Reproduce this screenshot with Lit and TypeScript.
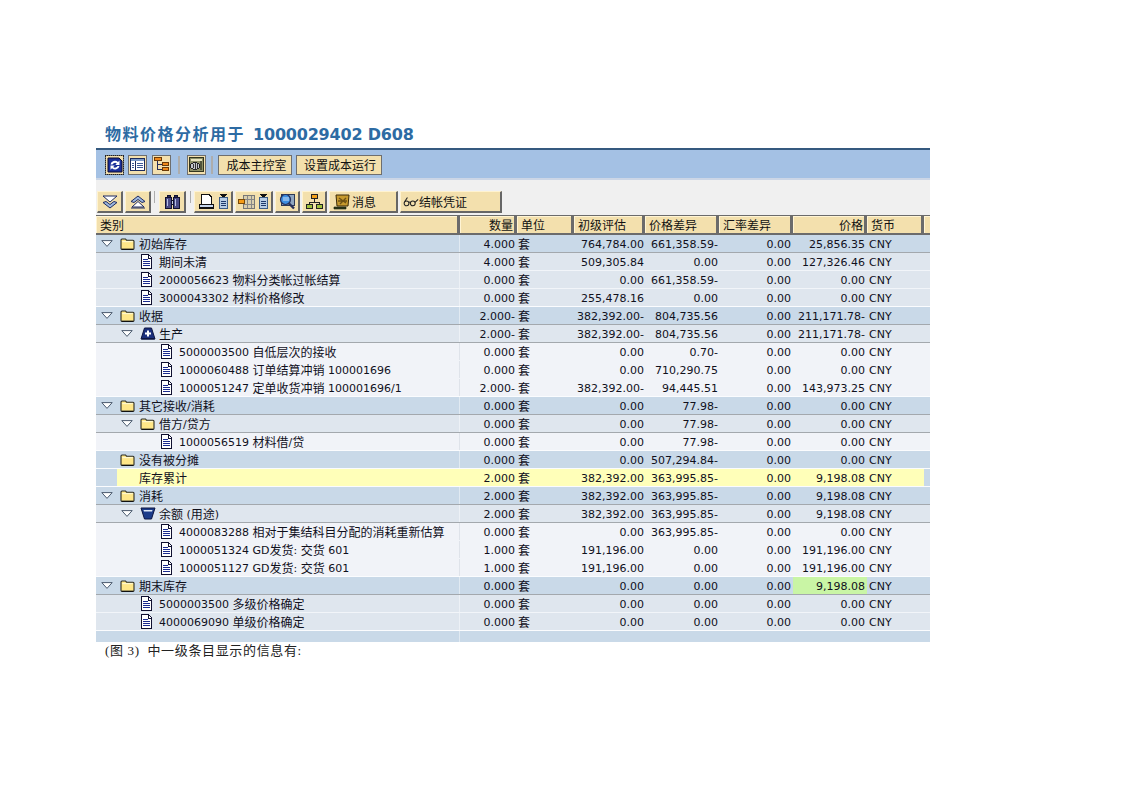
import { LitElement, html, css, svg } from "lit";
import { customElement } from "lit/decorators.js";

const ic = (w: number, h: number, body: unknown) =>
  html`<svg width=${w} height=${h} viewBox="0 0 ${w} ${h}" shape-rendering="crispEdges" style="display:block;flex:none">${body}</svg>`;

const tri = html`<svg width="12" height="7" viewBox="0 0 12 7" style="display:block"><path d="M.8.6H11.2L6 6.4Z" fill="#fff" stroke="#4a5a6e" stroke-width="1"/></svg>`;
const folder = html`<svg width="15" height="12" viewBox="0 0 15 12" style="display:block;flex:none"><path d="M1 10.5V2Q1 1 2 1H5.5L6.5 2.2H13Q14 2.2 14 3.2V10.5Q14 11.3 13 11.3H2Q1 11.3 1 10.5Z" fill="#ffe788" stroke="#2c2c24" stroke-width="1.1"/><path d="M2.2 3.6H12.8" stroke="#fff8cc" stroke-width="1.2"/><path d="M1.5 11.4H13.5" stroke="#111" stroke-width="1.2"/></svg>`;
const doc = ic(13, 15, svg`<path d="M1.5.5H8.5L11.5 3.5V14.5H1.5Z" fill="#fff" stroke="#101030"/><path d="M8 1V4H11" fill="none" stroke="#101030"/><path d="M3 5H8M3 7H10M3 9H10M3 11H10" stroke="#1a2a90"/>`);
const plusIc = html`<svg width="16" height="13" viewBox="0 0 16 13" style="display:block"><path d="M4.5 1H11.5L15 12H1Z" fill="#1a2f7c" stroke="#0c1440"/><path d="M7 3.5H9V5.5H11V7.5H9V9.5H7V7.5H5V5.5H7Z" fill="#fff"/><path d="M1.5 11H14.5V12.5H1.5Z" fill="#0c1440"/></svg>`;
const bucketIc = html`<svg width="16" height="13" viewBox="0 0 16 13" style="display:block"><path d="M1 1H15L11.5 12H4.5Z" fill="#1d3c8a" stroke="#0c1440"/><path d="M3.5 3H12.5L12 4.6H4Z" fill="#dfe8f6"/></svg>`;

const refreshIc = html`<svg width="16" height="16" viewBox="0 0 16 16" style="display:block"><path d="M1 1H12L15 4V15H1Z" fill="#1a2f9a" stroke="#0a0a30"/><path d="M3.5 7.5A4.5 4.5 0 0 1 11 5L12.5 3.6V8H8.3L9.8 6.5A2.7 2.7 0 0 0 5.5 7.5ZM12.5 9A4.5 4.5 0 0 1 5 11.3L3.5 12.8V8.6H7.7L6.2 10A2.7 2.7 0 0 0 10.5 9Z" fill="#fff"/></svg>`;
const layoutIc = ic(15, 13, svg`<rect x=".5" y=".5" width="14" height="12" fill="#fff" stroke="#1c2c5c"/><path d="M1 1H14V3H1Z" fill="#7d9bc8"/><path d="M5.5 3V12" stroke="#1c2c5c"/><path d="M7 5H13M7 7H13M7 9H13M2 5H4M2 7H4M2 9H4" stroke="#3d5a95"/>`);
const treeIc = ic(15, 15, svg`<rect x=".5" y=".5" width="7" height="3" fill="#f08a1c" stroke="#6b3a08"/><path d="M3.5 4V12.5M3.5 7.5H8M3.5 12.5H8" stroke="#222c5a"/><rect x="8.5" y="5.5" width="6" height="3" fill="#f08a1c" stroke="#6b3a08"/><rect x="8.5" y="10.5" width="6" height="3" fill="#f08a1c" stroke="#6b3a08"/>`);
const boxIc = ic(15, 15, svg`<rect x=".5" y=".5" width="14" height="14" fill="#8d9067" stroke="#33351f"/><rect x="2" y="2" width="11" height="2" fill="#e8e4bf"/><rect x="11" y="4" width="2" height="9" fill="#50533a"/><ellipse cx="6" cy="9" rx="4.5" ry="3.5" fill="#c2c6cc" stroke="#222"/><path d="M4 7V11M6 6V12M8 7V11" stroke="#333"/>`);
const downIc = html`<svg width="16" height="14" viewBox="0 0 16 14" style="display:block"><path d="M1 1H15L8 7Z" fill="#fff" stroke="#1e2a60"/><path d="M4 6.5L8 9.5 12 6.5 15 7.5 8 13 1 7.5Z" fill="#9db8e0" stroke="#1e2a60"/></svg>`;
const upIc = html`<svg width="16" height="14" viewBox="0 0 16 14" style="display:block"><path d="M8 1L15 6.5 12 7.5 8 4.5 4 7.5 1 6.5Z" fill="#9db8e0" stroke="#1e2a60"/><path d="M8 6.5L14 12H2Z" fill="#fff" stroke="#1e2a60"/><path d="M1 13H15" stroke="#1e2a60"/></svg>`;
const binoIc = ic(16, 15, svg`<path d="M1 3H7V14H1ZM9 3H15V14H9Z" fill="#4a4a86" stroke="#12122e"/><rect x="7" y="6" width="2" height="4" fill="#c9cfe6" stroke="#12122e"/><path d="M3 1H6V3H3ZM10 1H13V3H10Z" fill="#2a2a5e" stroke="#12122e"/><path d="M3 5V12M11 5V12" stroke="#b7c0e2"/>`);
const printIc = ic(17, 15, svg`<path d="M3.5.5H11L13.5 3V10H3.5Z" fill="#fff" stroke="#111"/><path d="M1.5 10.5H15.5V13.5H1.5Z" fill="#c7d6ec" stroke="#111"/><path d="M1 14H16V15H1Z" fill="#111"/>`);
const clipIc = ic(11, 15, svg`<path d="M2 0H9L5.5 4Z" fill="#111"/><rect x="1.5" y="3.5" width="8" height="11" fill="#b7cde6" stroke="#3c5c86"/><path d="M3 7H8M3 9H8M3 11H8" stroke="#1e3a6c"/>`);
const gridIc = ic(17, 14, svg`<rect x="5.5" y=".5" width="11" height="13" fill="#d9cfae" stroke="#777"/><path d="M9 1V13M13 1V13M6 4.5H16M6 9H16" stroke="#888"/><rect x=".5" y="4.5" width="6" height="4" fill="#f59b16" stroke="#7a4a08"/>`);
const lensIc = html`<svg width="18" height="17" viewBox="0 0 18 17" style="display:block"><rect x="3.5" y="1.5" width="13" height="11" fill="#8fa6c0" stroke="#2d3a55"/><circle cx="7.5" cy="6.5" r="5" fill="#3d8ee0" stroke="#26305a" stroke-width="1.2"/><path d="M5 5H11M5 7H11" stroke="#cfe2f6"/><path d="M11 10.5L16 15.5" stroke="#26305a" stroke-width="2.4"/></svg>`;
const hierIc = ic(17, 15, svg`<rect x="5.5" y=".5" width="6" height="4" fill="#f2a01a" stroke="#222"/><path d="M8.5 5V8M3.5 10V8H13.5V10" fill="none" stroke="#222"/><rect x=".5" y="10.5" width="6" height="4" fill="#9fc23c" stroke="#222"/><rect x="10.5" y="10.5" width="6" height="4" fill="#9fc23c" stroke="#222"/>`);
const scrollIc = html`<svg width="18" height="16" viewBox="0 0 18 16" style="display:block;flex:none"><path d="M3 1H16L15 12H4Z" fill="#c79a2e" stroke="#3a2a08"/><path d="M6 4L13 9M13 4L7 10M5 7H14" stroke="#6f5214" stroke-width="1.4"/><path d="M1 13H13V15H1Z" fill="#2e3a1a" stroke="#1a1f0c" stroke-width=".6"/></svg>`;
const glassIc = html`<svg width="16" height="12" viewBox="0 0 18 12" style="display:block;flex:none"><circle cx="4" cy="7.5" r="2.7" fill="none" stroke="#222" stroke-width="1.2"/><circle cx="11" cy="7.5" r="2.7" fill="none" stroke="#222" stroke-width="1.2"/><path d="M6.6 6.5Q7.5 5.5 8.4 6.5M2 5.5L5 1M13.5 6.5L17 3" fill="none" stroke="#222" stroke-width="1.2"/></svg>`;

type Row = {
  level: "l1" | "l2" | "l3";
  depth: 0 | 1 | 2;
  toggle?: boolean;
  icon?: unknown;
  text: string;
  vals: string[];
  line?: boolean;
  sum?: boolean;
  green?: boolean;
};

const T = "套";
const rows: Row[] = [
  { level: "l1", depth: 0, toggle: true, icon: folder, text: "初始库存", line: true, vals: ["4.000", "764,784.00", "661,358.59-", "0.00", "25,856.35"] },
  { level: "l2", depth: 1, icon: doc, text: "期间未清", vals: ["4.000", "509,305.84", "0.00", "0.00", "127,326.46"] },
  { level: "l2", depth: 1, icon: doc, text: "2000056623 物料分类帐过帐结算", vals: ["0.000", "0.00", "661,358.59-", "0.00", "0.00"] },
  { level: "l2", depth: 1, icon: doc, text: "3000043302 材料价格修改", vals: ["0.000", "255,478.16", "0.00", "0.00", "0.00"] },
  { level: "l1", depth: 0, toggle: true, icon: folder, text: "收据", line: true, vals: ["2.000-", "382,392.00-", "804,735.56", "0.00", "211,171.78-"] },
  { level: "l2", depth: 1, toggle: true, icon: plusIc, text: "生产", line: true, vals: ["2.000-", "382,392.00-", "804,735.56", "0.00", "211,171.78-"] },
  { level: "l3", depth: 2, icon: doc, text: "5000003500 自低层次的接收", vals: ["0.000", "0.00", "0.70-", "0.00", "0.00"] },
  { level: "l3", depth: 2, icon: doc, text: "1000060488 订单结算冲销 100001696", vals: ["0.000", "0.00", "710,290.75", "0.00", "0.00"] },
  { level: "l3", depth: 2, icon: doc, text: "1000051247 定单收货冲销 100001696/1", vals: ["2.000-", "382,392.00-", "94,445.51", "0.00", "143,973.25"] },
  { level: "l1", depth: 0, toggle: true, icon: folder, text: "其它接收/消耗", line: true, vals: ["0.000", "0.00", "77.98-", "0.00", "0.00"] },
  { level: "l2", depth: 1, toggle: true, icon: folder, text: "借方/贷方", line: true, vals: ["0.000", "0.00", "77.98-", "0.00", "0.00"] },
  { level: "l3", depth: 2, icon: doc, text: "1000056519 材料借/贷", vals: ["0.000", "0.00", "77.98-", "0.00", "0.00"] },
  { level: "l1", depth: 0, icon: folder, text: "没有被分摊", vals: ["0.000", "0.00", "507,294.84-", "0.00", "0.00"] },
  { level: "l1", depth: 0, sum: true, text: "库存累计", vals: ["2.000", "382,392.00", "363,995.85-", "0.00", "9,198.08"] },
  { level: "l1", depth: 0, toggle: true, icon: folder, text: "消耗", line: true, vals: ["2.000", "382,392.00", "363,995.85-", "0.00", "9,198.08"] },
  { level: "l2", depth: 1, toggle: true, icon: bucketIc, text: "余额 (用途)", line: true, vals: ["2.000", "382,392.00", "363,995.85-", "0.00", "9,198.08"] },
  { level: "l3", depth: 2, icon: doc, text: "4000083288 相对于集结科目分配的消耗重新估算", vals: ["0.000", "0.00", "363,995.85-", "0.00", "0.00"] },
  { level: "l3", depth: 2, icon: doc, text: "1000051324 GD发货: 交货 601", vals: ["1.000", "191,196.00", "0.00", "0.00", "191,196.00"] },
  { level: "l3", depth: 2, icon: doc, text: "1000051127 GD发货: 交货 601", vals: ["1.000", "191,196.00", "0.00", "0.00", "191,196.00"] },
  { level: "l1", depth: 0, toggle: true, icon: folder, text: "期末库存", line: true, green: true, vals: ["0.000", "0.00", "0.00", "0.00", "9,198.08"] },
  { level: "l2", depth: 1, icon: doc, text: "5000003500 多级价格确定", vals: ["0.000", "0.00", "0.00", "0.00", "0.00"] },
  { level: "l2", depth: 1, icon: doc, text: "4000069090 单级价格确定", vals: ["0.000", "0.00", "0.00", "0.00", "0.00"] },
];

const mixed = (t: string) =>
  t.split(/([\u4e00-\u9fff]+)/).map((p, i) => (i % 2 ? html`<span class="zh">${p}</span>` : p));

@customElement("app-root")
export class AppRoot extends LitElement {
  static styles = css`
    :host {
      display: block;
      background: #fff;
      height: 793px;
      font-family: "DejaVu Sans", "Noto Sans CJK SC", sans-serif;
      font-size: 11px;
      color: #10101c;
      overflow: hidden;
    }
    .title {
      padding: 123px 0 0 105px;
      height: 25px;
      box-sizing: content-box;
      line-height: 21px;
      font-size: 16px;
      font-weight: 700;
      color: #2d6ba3;
      white-space: nowrap;
      letter-spacing: -0.2px;
    }
    .title .cjk {
      font-family: "Noto Sans CJK SC", sans-serif;
      font-size: 16px;
      letter-spacing: 1.5px;
      margin-right: 8px;
    }
    .panel {
      margin-left: 96px;
      width: 834px;
    }
    .appbar {
      height: 27px;
      padding: 1px 0 0 9px;
      border-top: 2px solid #35597f;
      background: #a4c1e4;
      display: flex;
      align-items: center;
      box-sizing: content-box;
    }
    .appbar .tb { height: 20px; }
    .band {
      height: 37px;
      background: #f0f0f0;
      border-top: 2px solid #ccd6e6;
      display: flex;
      align-items: flex-end;
      padding: 0 0 2px 1px;
      box-sizing: border-box;
    }
    .tb {
      display: flex;
      align-items: center;
      justify-content: center;
      box-sizing: border-box;
      height: 22px;
      background: #f3e0ad;
      border: 1px solid #6e6e6e;
      font-family: "Noto Sans CJK SC", sans-serif;
      font-size: 12px;
      color: #111;
      flex: none;
      gap: 3px;
    }
    .band .tb {
      border-color: #fff3d0 #666 #666 #fff3d0;
      border-width: 1px 2px 2px 1px;
    }
    .focus { outline: 1px dotted #222; outline-offset: -1px; }
    .sep { width: 2px; height: 18px; background: #adadad; flex: none; }
    .band .sep { width: 1px; height: 12px; align-self: center; }
    .w19 { width: 19px; }
    .w26 { width: 26px; }
    .w27 { width: 27px; }
    .w25 { width: 25px; }
    .w39 { width: 39px; }
    .w38 { width: 38px; }
    .w74 { width: 74px; padding-left: 3px; }
    .w86 { width: 86px; padding-left: 2px; }
    .w69 { width: 69px; }
    .w102 { width: 102px; }
    .left { justify-content: flex-start; padding-left: 3px; gap: 1px; }
    .lg2 { padding-left: 2px; }
    .g4 { margin-left: 4px; }
    .g5 { margin-left: 5px; }
    .g2 { margin-left: 2px; }
    .g3 { margin-left: 3px; }
    .g7 { margin-left: 7px; }
    .grid {
      display: grid;
      grid-template-columns: 364px 57px 57px 71px 74px 74px 74px 57px 6px;
    }
    .head {
      height: 20px;
      background: #6b6b6b;
      padding: 1px 0 2px;
      box-sizing: border-box;
      font-family: "Noto Sans CJK SC", sans-serif;
      font-size: 12px;
      color: #111;
    }
    .head > div {
      background: #f3e0ad;
      border-top: 1px solid #fff4d4;
      border-left: 1px solid #fff4d4;
      margin-right: 3px;
      line-height: 16px;
      padding-left: 3px;
      overflow: hidden;
      white-space: nowrap;
    }
    .head > div:last-child { margin-right: 0; }
    .head > .r { text-align: right; padding: 0 1px 0 0; }
    .row {
      height: 18px;
      white-space: nowrap;
      box-sizing: border-box;
      border-bottom: 1px solid #f2f5f9;
    }
    .row.line { border-bottom-color: #a3a8ad; }
    .l1 { background: #c9d9e8; }
    .l2 { background: #dfe6ee; }
    .l3 { background: #f1f3f8; }
    .row.l3 { border-bottom-color: #f1f3f8; }
    .row.end { border-bottom-color: #fbfcfe; }
    .row > div { padding-top: 2px; box-sizing: border-box; height: 17px; line-height: 15px; }
    .row > .tree {
      padding-top: 0;
      display: flex;
      align-items: center;
      border-right: 1px solid rgba(255, 255, 255, 0.45);
    }
    .zh {
      font-family: "Noto Sans CJK SC", sans-serif;
      font-size: 12px;
      line-height: 1;
      vertical-align: -1px;
    }
    .txt { line-height: 15px; padding-top: 2px; }
    .l3 .tree { border-right-color: #dfe3ea; }
    .row > .d0 { padding-left: 5px; }
    .row > .d1 { padding-left: 25px; }
    .row > .d2 { padding-left: 45px; }
    .tog { width: 19px; flex: none; padding-top: 1px; margin-bottom: 1px; box-sizing: border-box; }
    .ico { width: 19px; flex: none; display: flex; align-items: center; height: 17px; }
    .row > .num { text-align: right; padding-right: 1px; }
    .row > .pr2 { padding-right: 2px; }
    .row > .unit { padding-left: 1px; padding-top: 1px; font-family: "Noto Sans CJK SC", sans-serif; font-size: 12px; }
    .row > .sumtree {
      margin-left: 21px;
      padding-left: 22px;
      background: #ffffb9;
      border-right: 0;
    }
    .row .y { background: #ffffb9; }
    .row .g { background: #c9f5a5; }
    .row > .cur { padding-left: 2px; }
    .tail { height: 11px; background: #c9d9e8; }
    .tail > div:first-child { border-right: 1px solid rgba(255, 255, 255, 0.45); }
    .note {
      padding: 0 0 0 105px;
      font-family: "Liberation Serif", "Noto Sans CJK SC", serif;
      font-size: 13px;
      line-height: 17px;
      color: #222;
      letter-spacing: 0.65px;
      white-space: pre;
    }
    .shift { margin-left: -1px; }
  `;

  private renderRow(r: Row, i: number) {
    const next = rows[i + 1];
    const end = !r.line && (!next || next.level === "l1");
    const cls = `row grid ${r.level} ${r.line ? "line" : ""} ${end ? "end" : ""}`;
    const y = r.sum ? "y" : "";
    return html`<div class=${cls}>
      ${r.sum
        ? html`<div class="tree sumtree"><span class="txt">${mixed(r.text)}</span></div>`
        : html`<div class="tree d${r.depth}">
            <span class="tog">${r.toggle ? tri : ""}</span>
            <span class="ico">${r.icon}</span>
            <span class="txt">${mixed(r.text)}</span>
          </div>`}
      <div class="num pr2 ${y}">${r.vals[0]}</div>
      <div class="unit ${y}">${T}</div>
      <div class="num ${y}">${r.vals[1]}</div>
      <div class="num ${y}">${r.vals[2]}</div>
      <div class="num pr2 ${y}">${r.vals[3]}</div>
      <div class="num pr2 ${y} ${r.green ? "g" : ""}">${r.vals[4]}</div>
      <div class="cur ${y}">CNY</div>
      <div></div>
    </div>`;
  }

  render() {
    return html`
      <div class="title"><span class="cjk">物料价格分析用于</span>1000029402 D608</div>
      <div class="panel">
        <div class="appbar">
          <div class="tb w19 focus">${refreshIc}</div>
          <div class="tb w19 g4">${layoutIc}</div>
          <div class="tb w19 g5">${treeIc}</div>
          <div class="sep g7"></div>
          <div class="tb w19 g7">${boxIc}</div>
          <div class="sep g5"></div>
          <div class="tb w74 g5">成本主控室</div>
          <div class="tb w86 g4">设置成本运行</div>
        </div>
        <div class="band">
          <div class="tb w26">${downIc}</div>
          <div class="tb w26 g2">${upIc}</div>
          <div class="sep g3"></div>
          <div class="tb w27 g4">${binoIc}</div>
          <div class="sep g4"></div>
          <div class="tb w39 g3">${printIc}${clipIc}</div>
          <div class="tb w38 g2">${gridIc}${clipIc}</div>
          <div class="tb w25 g2">${lensIc}</div>
          <div class="tb w25 g2">${hierIc}</div>
          <div class="tb w69 g2 left">${scrollIc}消息</div>
          <div class="tb w102 g2 left lg2">${glassIc}<span class="shift">结帐凭证</span></div>
        </div>
        <div class="head grid">
          <div>类别</div>
          <div class="r">数量</div>
          <div>单位</div>
          <div>初级评估</div>
          <div>价格差异</div>
          <div>汇率差异</div>
          <div class="r">价格</div>
          <div>货币</div>
          <div></div>
        </div>
        ${rows.map((r, i) => this.renderRow(r, i))}
        <div class="tail grid"><div></div></div>
      </div>
      <div class="note">(图 3)  中一级条目显示的信息有:</div>
    `;
  }
}
